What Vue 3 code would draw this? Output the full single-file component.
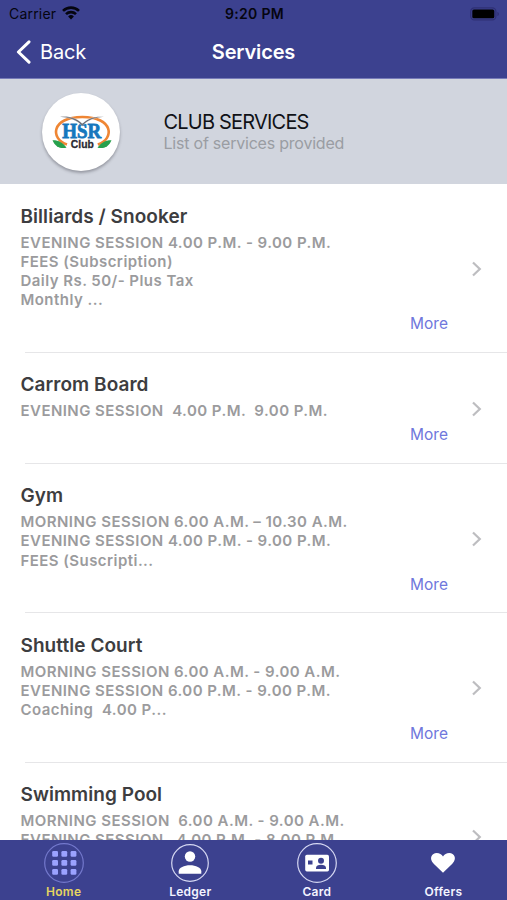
<script setup>
const services = [
  {
    name: 'Billiards / Snooker',
    lines: ['EVENING SESSION 4.00 P.M. - 9.00 P.M.', 'FEES (Subscription)', 'Daily Rs. 50/- Plus Tax', 'Monthly ...'],
  },
  { name: 'Carrom Board', lines: ['EVENING SESSION  4.00 P.M.  9.00 P.M.'] },
  {
    name: 'Gym',
    lines: ['MORNING SESSION 6.00 A.M. – 10.30 A.M.', 'EVENING SESSION 4.00 P.M. - 9.00 P.M.', 'FEES (Suscripti...'],
  },
  {
    name: 'Shuttle Court',
    lines: ['MORNING SESSION 6.00 A.M. - 9.00 A.M.', 'EVENING SESSION 6.00 P.M. - 9.00 P.M.', 'Coaching  4.00 P...'],
  },
  {
    name: 'Swimming Pool',
    lines: ['MORNING SESSION  6.00 A.M. - 9.00 A.M.', 'EVENING SESSION   4.00 P.M. - 8.00 P.M.'],
  },
]
const dots = [0, 1, 2, 3, 4, 5, 6, 7, 8]
</script>

<template>
  <div class="screen">
    <header class="top">
      <div class="status">
        <div class="carrier">
          <span>Carrier</span>
          <svg width="18" height="14" viewBox="0 0 18 14">
            <g fill="none" stroke="#05050f" stroke-width="2.6">
              <path d="M1 4.9a11.4 11.4 0 0 1 16 0" />
              <path d="M4 8.1a7.2 7.2 0 0 1 10 0" />
            </g>
            <path d="M9 13.6 6.1 10.5a4.2 4.2 0 0 1 5.8 0z" fill="#05050f" />
          </svg>
        </div>
        <span class="clock">9:20 PM</span>
        <svg class="battery" width="30" height="14" viewBox="0 0 30 14">
          <rect x=".7" y=".9" width="25.2" height="12" rx="3.6" fill="none" stroke="#2f3075" stroke-width="1.2" />
          <rect x="2.3" y="2.5" width="22" height="8.8" rx="1.6" fill="#000" />
          <path d="M27.4 5v4c1-.3 1.5-1 1.5-2s-.5-1.700-1.500-2z" fill="#2f3075" />
        </svg>
      </div>
      <nav class="bar">
        <div class="back">
          <svg width="15" height="24" viewBox="0 0 15 24">
            <path d="M13 1.800 2.400 12 13 22.200" fill="none" stroke="#fff" stroke-width="3" stroke-linecap="round" stroke-linejoin="round" />
          </svg>
          <span>Back</span>
        </div>
        <h1>Services</h1>
        <span></span>
      </nav>
    </header>

    <section class="banner">
      <div class="logo">
        <svg width="78" height="78" viewBox="0 0 78 78">
          <path d="M25 51.500C8 46 9 24 40.300 24s32.500 22 15.500 27.500" fill="none" stroke="#ef8634" stroke-width="2.600" />
          <path d="M10.500 47.200c6-.2 10.500 2.500 14 7.500-6 1.500-11.500-1-14-7.500z" fill="#27a04c" />
          <path d="M69.500 47.200c-6-.2-10.500 2.500-14 7.500 6 1.500 11.500-1 14-7.500z" fill="#27a04c" />
          <text x="39.800" y="45.300" text-anchor="middle" textLength="39" lengthAdjust="spacingAndGlyphs" class="hsr">HSR</text>
          <path d="M18 23.800c9-.8 17 1 22.300 7C45.500 25 53 23 62 23.800c-9 .8-17 3.200-21.700 9.400C35.500 27 27 24.600 18 23.800z" fill="#66676f" stroke="#fff" stroke-width=".3" />
          <text x="40.300" y="54.700" text-anchor="middle" textLength="23" lengthAdjust="spacingAndGlyphs" class="club">Club</text>
        </svg>
      </div>
      <div class="heading">
        <h2>CLUB SERVICES</h2>
        <p>List of services provided</p>
      </div>
    </section>

    <main class="list">
      <article v-for="s in services" :key="s.name" class="item">
        <div class="content">
          <h3>{{ s.name }}</h3>
          <p v-for="line in s.lines" :key="line">{{ line }}</p>
          <a v-if="s.name !== 'Swimming Pool'" class="more">More</a>
          <span v-else class="spacer"></span>
        </div>
        <svg class="chevron" width="11" height="16" viewBox="0 0 11 16">
          <path d="M2 1.500 8.800 8 2 14.500" fill="none" stroke="#bdbdc0" stroke-width="2.200" />
        </svg>
      </article>
    </main>

    <footer class="tabs">
      <div class="tab active">
        <svg width="42" height="42" viewBox="0 0 42 42">
          <circle cx="21" cy="21" r="19.300" fill="none" stroke="#7378cc" stroke-width="1.200" />
          <rect v-for="d in dots" :key="d" :x="9.200 + (d % 3) * 9.200" :y="9 + Math.floor(d / 3) * 9" width="5.800" height="5.800" rx="1.300" fill="#9ba2ff" />
        </svg>
        <span>Home</span>
      </div>
      <div class="tab">
        <svg width="42" height="42" viewBox="0 0 42 42">
          <circle cx="21" cy="21" r="18.300" fill="none" stroke="#d5d7f2" stroke-width="1.200" />
          <circle cx="21" cy="14.500" r="5.200" fill="#fff" />
          <path d="M9.700 31.800v-2.600c0-3.500 5.500-6 11.300-6s11.300 2.500 11.300 6v2.600z" fill="#fff" />
        </svg>
        <span>Ledger</span>
      </div>
      <div class="tab">
        <svg width="42" height="42" viewBox="0 0 42 42">
          <circle cx="21" cy="21" r="19.300" fill="none" stroke="#d5d7f2" stroke-width="1.200" />
          <rect x="9.200" y="12.700" width="23.800" height="16.800" rx="1.700" fill="#fff" />
          <rect x="12" y="18.500" width="4.500" height="4" fill="#3c418f" />
          <circle cx="25" cy="18.700" r="3" fill="#3c418f" />
          <path d="M20 27v-1.300c0-2 2.300-3 5-3s5 1 5 3V27z" fill="#3c418f" />
        </svg>
        <span>Card</span>
      </div>
      <div class="tab">
        <svg width="42" height="42" viewBox="0 0 42 42">
          <path d="M21 30.800 11.700 21.700C6.500 16.500 9.800 11 14.700 11c2.700 0 5 1.300 6.300 3.500 1.300-2.200 3.600-3.500 6.300-3.500 4.900 0 8.200 5.500 3 10.700z" fill="#fff" />
        </svg>
        <span>Offers</span>
      </div>
    </footer>
  </div>
</template>

<style>
body { margin: 0; background: #fff; }
</style>

<style scoped>
.screen { width: 507px; height: 900px; display: flex; flex-direction: column; overflow: hidden; background: #fff; font-family: Inter, "Liberation Sans", sans-serif; }
h1, h2, h3, p { margin: 0; }
svg { display: block; flex: none; }
.top { flex: none; height: 79px; background: #3c418f; box-sizing: border-box; border-bottom: 1px solid #777bb8; }
.status { height: 27px; padding: 0 7px 0 9px; display: grid; grid-template-columns: 1fr auto 1fr; align-items: center; color: #05050f; font-size: 14px; }
.carrier { display: flex; align-items: center; gap: 6px; letter-spacing: .2px; }
.carrier svg { margin-top: -2px; }
.clock { font-weight: 600; letter-spacing: .3px; }
.battery { justify-self: end; }
.bar { height: 50px; padding: 0 16px; display: grid; grid-template-columns: 1fr auto 1fr; align-items: center; color: #fff; }
.back { display: flex; align-items: center; gap: 9px; font-size: 20px; letter-spacing: -.2px; }
h1 { font-size: 20px; font-weight: 600; letter-spacing: -.15px; }
.banner { flex: none; height: 105px; background: #d1d5de; display: flex; align-items: center; padding-left: 42px; box-sizing: border-box; }
.logo { width: 78px; height: 78px; border-radius: 50%; background: #fff; box-shadow: 0 2px 3px rgba(60, 60, 70, .4); }
.hsr { font: 700 21px "Liberation Serif", serif; fill: #1677bd; stroke: #1677bd; stroke-width: .8px; }
.club { font: 700 11px "Liberation Sans", sans-serif; fill: #292932; stroke: #292932; stroke-width: .3px; }
.heading { margin-left: 43.500px; }
h2 { font-size: 20px; line-height: 24px; font-weight: 400; color: #101217; letter-spacing: -.8px; }
.heading p { font-size: 16px; line-height: 19px; color: #9a9da3; letter-spacing: -.22px; }
.list { flex: 1; min-height: 0; overflow: hidden; }
.item { display: flex; align-items: center; padding: 20.500px 25px 18.700px 20.500px; position: relative; }
.item::after { content: ""; position: absolute; left: 25px; right: 0; bottom: 0; height: 1px; background: #e6e6e8; }
.content { flex: 1; display: flex; flex-direction: column; }
h3 { font-size: 19px; line-height: 24px; font-weight: 600; color: #3d3d40; margin-bottom: 4px; letter-spacing: .05px; }
.content p { font-size: 15px; line-height: 19.100px; font-weight: 600; color: #9b9b9d; letter-spacing: .45px; white-space: pre; }
.more { align-self: flex-end; margin: 5px 23px 0 0; font-size: 15.500px; line-height: 20px; color: #6f77dc; }
.spacer { height: 43px; }
.chevron { margin-bottom: 1px; }
.tabs { flex: none; height: 60px; background: #3c418f; display: grid; grid-template-columns: repeat(4, 126.600px); padding: 2px 0 0 .4px; box-sizing: border-box; }
.tab { display: flex; flex-direction: column; align-items: center; color: #f3f4ff; font-size: 12px; line-height: 15px; font-weight: 600; letter-spacing: .25px; }
.active { color: #e6d560; }
</style>
